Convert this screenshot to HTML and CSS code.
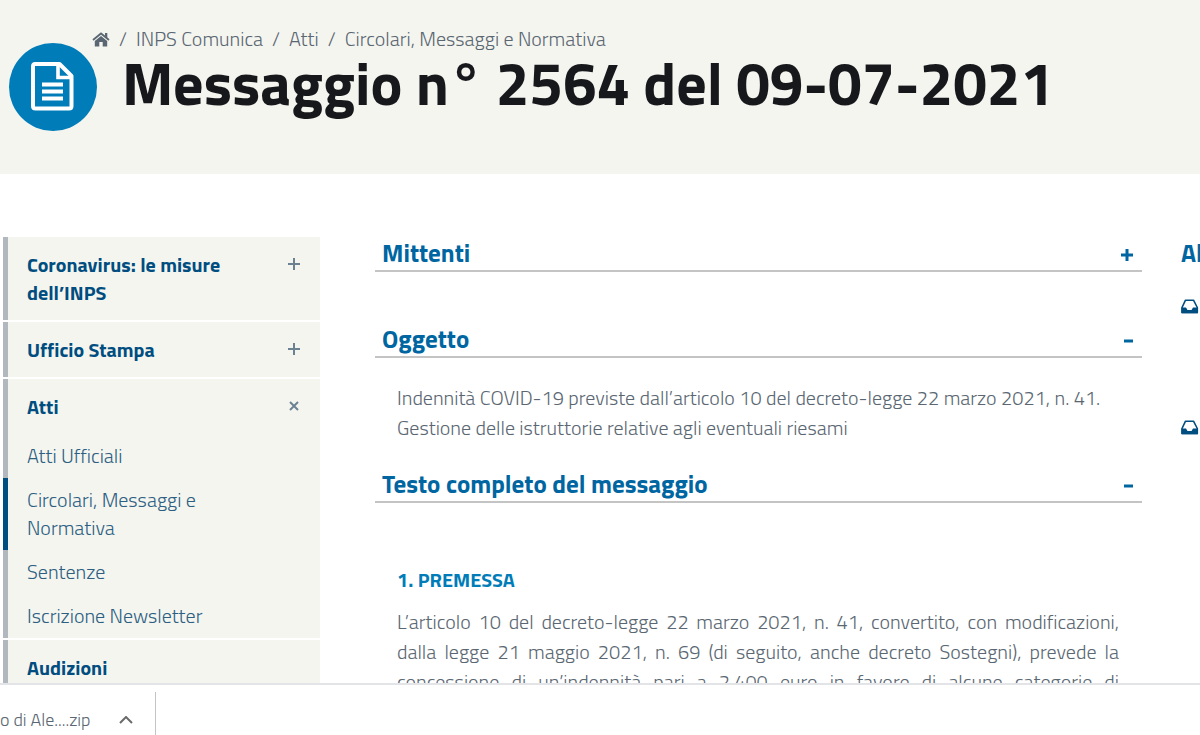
FILE: index.html
```html
<!DOCTYPE html>
<html lang="it">
<head>
    <meta charset="UTF-8">
    <meta name="viewport" content="width=device-width, initial-scale=1.0">
    <title>Messaggio n° 2564 del 09-07-2021</title>
    <link rel="stylesheet" href="styles.css">
</head>
<body>
    <div class="page">
        <header class="page-header">
            <div class="header-icon">
                <svg viewBox="0 0 88 88" width="88" height="88" aria-hidden="true">
                    <circle cx="44" cy="44" r="44" fill="#007db8"/>
                    <path d="M26 21H50.500L62.500 33V63Q62.500 65.500 60 65.500H26.500Q24 65.500 24 63V23.500Q24 21 26 21Z" fill="none" stroke="#fff" stroke-width="4" stroke-linejoin="round"/>
                    <path d="M49 21V34.500H62.500" fill="none" stroke="#fff" stroke-width="3.600"/>
                    <path d="M33 41.500H54M33 48.500H54M33 55.500H54" stroke="#fff" stroke-width="4"/>
                </svg>
            </div>
            <div class="header-text">
                <nav class="breadcrumb" aria-label="Percorso">
                    <ol>
                        <li><a href="#home" aria-label="Home"><svg viewBox="0 0 18 15" width="18" height="15"><path d="M9 4L2.800 9V14.500H7.300V10H10.700V14.500H15.200V9Z" fill="currentColor"/><path d="M1 8L9 1.500L17 8" fill="none" stroke="currentColor" stroke-width="1.800"/><path d="M13 1H15.300V6L13 4Z" fill="currentColor"/></svg></a></li>
                        <li><a href="#comunica">INPS Comunica</a></li>
                        <li><a href="#atti">Atti</a></li>
                        <li><a href="#circolari">Circolari, Messaggi e Normativa</a></li>
                    </ol>
                </nav>
                <h1>Messaggio n° 2564 del 09-07-2021</h1>
            </div>
        </header>

        <div class="content">
            <nav class="sidebar" aria-label="Menu">
                <div class="menu-group">
                    <button type="button" class="menu-head"><span>Coronavirus: le misure dell’INPS</span><svg viewBox="0 0 12 12" width="12" height="12"><path d="M6 0V12M0 6H12"/></svg></button>
                </div>
                <div class="menu-group">
                    <button type="button" class="menu-head"><span>Ufficio Stampa</span><svg viewBox="0 0 12 12" width="12" height="12"><path d="M6 0V12M0 6H12"/></svg></button>
                </div>
                <div class="menu-group">
                    <button type="button" class="menu-head" aria-expanded="true"><span>Atti</span><svg viewBox="0 0 12 12" width="12" height="12"><path d="M2 2L10 10M10 2L2 10"/></svg></button>
                    <ul>
                        <li><a href="#ufficiali">Atti Ufficiali</a></li>
                        <li class="active"><a href="#circolari">Circolari, Messaggi e Normativa</a></li>
                        <li><a href="#sentenze">Sentenze</a></li>
                        <li><a href="#newsletter">Iscrizione Newsletter</a></li>
                    </ul>
                </div>
                <div class="menu-group">
                    <a href="#audizioni" class="menu-head">Audizioni</a>
                </div>
            </nav>

            <main>
                <section class="closed">
                    <h2><button type="button"><span>Mittenti</span><svg viewBox="0 0 12 12" width="12" height="12"><path d="M6 0V12M0 6H12"/></svg></button></h2>
                </section>
                <section>
                    <h2><button type="button" aria-expanded="true"><span>Oggetto</span><svg viewBox="0 0 12 12" width="12" height="12"><path d="M3 6H12"/></svg></button></h2>
                    <p class="subject">Indennità COVID-19 previste dall’articolo 10 del decreto-legge 22 marzo 2021, n. 41. Gestione delle istruttorie relative agli eventuali riesami</p>
                </section>
                <section>
                    <h2><button type="button" aria-expanded="true"><span>Testo completo del messaggio</span><svg viewBox="0 0 12 12" width="12" height="12"><path d="M3 6H12"/></svg></button></h2>
                    <div class="message">
                        <h3>1. PREMESSA</h3>
                        <p>L’articolo 10 del decreto-legge 22 marzo 2021, n. 41, convertito, con modificazioni,<br>dalla legge 21 maggio 2021, n. 69 (di seguito, anche decreto Sostegni), prevede la<br>concessione di un’indennità pari a 2.400 euro in favore di alcune categorie di</p>
                    </div>
                </section>
            </main>

            <aside>
                <h2>Allegati</h2>
                <a href="#allegato1" aria-label="Allegato 1"><svg viewBox="0 0 18 15" width="18" height="15"><path d="M4.500 1.200H12.500L16.300 8.500V13.500H1V8.500Z" fill="none" stroke="currentColor" stroke-width="1.600" stroke-linejoin="round"/><path d="M.5 8.500H5L6.500 11H10.500L12 8.500H17V14.300H.5Z" fill="currentColor"/></svg></a>
                <a href="#allegato2" aria-label="Allegato 2"><svg viewBox="0 0 18 15" width="18" height="15"><path d="M4.500 1.200H12.500L16.300 8.500V13.500H1V8.500Z" fill="none" stroke="currentColor" stroke-width="1.600" stroke-linejoin="round"/><path d="M.5 8.500H5L6.500 11H10.500L12 8.500H17V14.300H.5Z" fill="currentColor"/></svg></a>
            </aside>
        </div>
    </div>

    <footer class="downloads">
        <div class="download-item">
            <span>o di Ale....zip</span>
            <button type="button" aria-label="Apri menu"><svg viewBox="0 0 14 8" width="14" height="8"><path d="M1 7L7 1L13 7"/></svg></button>
        </div>
    </footer>
</body>
</html>
```
FILE: styles.css
```css
* {
    box-sizing: border-box;
}

body {
    display: flex;
    flex-direction: column;
    height: 100vh;
    margin: 0;
    overflow: hidden;
    background-color: #fff;
    color: #5a6772;
    font-family: 'Titillium Web', 'Roboto', sans-serif;
    font-size: 20px;
    font-weight: 300;
    line-height: 30px;
}

h1, h2, h3, p, ul, ol {
    margin: 0;
    padding: 0;
}

ul, ol {
    list-style: none;
}

a {
    color: inherit;
    text-decoration: none;
}

svg {
    display: block;
    flex: none;
}

button {
    padding: 0;
    border: none;
    background: none;
    color: inherit;
    font: inherit;
    text-align: left;
    cursor: pointer;
}

.page {
    flex: 1;
    min-height: 0;
    overflow: hidden;
}

/* Testata */
.page-header {
    display: flex;
    padding: 24px 9px 43px;
    background-color: #f5f5f0;
}

.header-icon {
    padding-top: 19px;
}

.header-text {
    margin-left: -5px;
}

.breadcrumb ol {
    display: flex;
}

.breadcrumb li {
    display: flex;
    align-items: center;
}

.breadcrumb li + li::before {
    content: "/";
    padding: 0 9px;
}

h1 {
    padding-left: 30px;
    color: #17181c;
    font-size: 60px;
    font-weight: 700;
    line-height: 58px;
}

.content {
    display: flex;
    padding: 63px 0 0 3px;
}

/* Menu laterale */
.sidebar {
    flex: 0 0 317px;
}

.menu-group {
    margin-bottom: 2px;
    background-color: #f5f5f0;
    border-left: 5px solid #b1b8be;
    line-height: 28px;
}

.menu-head {
    display: flex;
    justify-content: space-between;
    width: 100%;
    padding: 14px 20px 13px 19px;
    color: #004d80;
    font-weight: 700;
}

.menu-head span {
    max-width: 210px;
}

.menu-head svg {
    margin-top: 7px;
    fill: none;
    stroke: #6c8292;
    stroke-width: 2;
}

.menu-group li {
    margin-left: -5px;
    padding: 8px 80px 8px 19px;
    border-left: 5px solid transparent;
    color: #2c5f82;
}

.menu-group li.active {
    border-left-color: #004d80;
}

/* Contenuto */
main {
    flex: 1;
    margin: 0 39px 0 55px;
}

main h2 {
    border-bottom: 2px solid #c4c4c4;
    color: #0066a1;
    font-size: 25px;
    font-weight: 700;
    line-height: 33px;
}

main h2 button {
    display: flex;
    align-items: center;
    justify-content: space-between;
    width: 100%;
    padding: 0 9px 0 7px;
}

main h2 svg {
    margin-top: 3px;
    fill: none;
    stroke: currentColor;
    stroke-width: 3;
}

.closed {
    margin-bottom: 51px;
}

.subject {
    padding: 25px 22px;
}

.message {
    padding: 62px 23px 0 22px;
}

.message h3 {
    margin-bottom: 12px;
    color: #007db8;
    font-size: 20px;
    font-weight: 700;
}

.message p {
    text-align: justify;
    text-align-last: justify;
}

aside {
    flex: 0 0 19px;
    overflow: hidden;
    color: #0066a1;
}

aside h2 {
    font-size: 25px;
    font-weight: 700;
    line-height: 33px;
}

aside a {
    display: block;
    margin-top: 29px;
    color: #004d80;
}

aside a + a {
    margin-top: 106px;
}

/* Barra dei download */
.downloads {
    flex: none;
    padding-top: 7px;
    border-top: 2px solid #e2e4e8;
}

.download-item {
    display: flex;
    align-items: center;
    width: 156px;
    height: 43px;
    padding-top: 12px;
    border-right: 1px solid #c4c4c4;
    font-size: 18px;
}

.download-item span {
    flex: 1;
}

.download-item button {
    padding-right: 22px;
}

.download-item path {
    fill: none;
    stroke: #6b6b6b;
    stroke-width: 2;
}
```
